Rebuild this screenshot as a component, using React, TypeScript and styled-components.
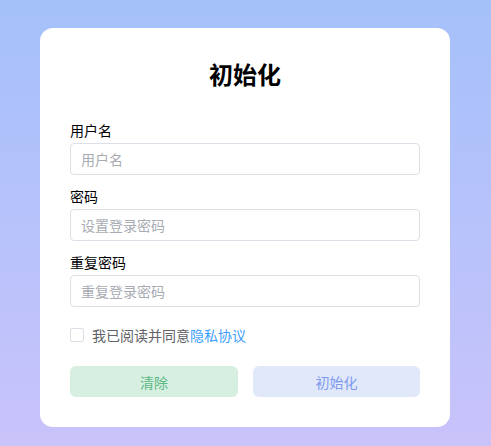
import { FC, useState } from "react";
import styled, { createGlobalStyle } from "styled-components";

const GlobalStyle = createGlobalStyle`
  html, body {
    margin: 0;
    padding: 0;
    height: 100%;
  }
  body {
    font-family: "Noto Sans CJK SC", "Noto Sans", sans-serif;
    background: linear-gradient(180deg, #a5c1fa 0%, #b7c2fb 50%, #c9c3fa 100%);
    min-height: 446px;
  }
  * {
    box-sizing: border-box;
  }
`;

const App: FC = () => {
  const [agreed, setAgreed] = useState(false);
  return (
    <>
      <GlobalStyle />
      <Page>
        <Card>
          <Title>初始化</Title>
          <Form>
            <Field>
              <Label>用户名</Label>
              <Input placeholder="用户名" />
            </Field>
            <Field>
              <Label>密码</Label>
              <Input type="password" placeholder="设置登录密码" />
            </Field>
            <Field>
              <Label>重复密码</Label>
              <Input type="password" placeholder="重复登录密码" />
            </Field>
            <Agreement>
              <Check
                $checked={agreed}
                onClick={() => setAgreed(!agreed)}
              />
              <span>
                我已阅读并同意<Link>隐私协议</Link>
              </span>
            </Agreement>
            <Buttons>
              <Button $variant="green">清除</Button>
              <Button $variant="blue">初始化</Button>
            </Buttons>
          </Form>
        </Card>
      </Page>
    </>
  );
};

export default App;

/**
 * Styled components
 */
const Page = styled.div`
  display: flex;
  justify-content: center;
  padding: 28px 41px 19px 40px;
`;
const Card = styled.div`
  width: 410px;
  background-color: #ffffff;
  border-radius: 13px;
  padding: 28px 30px 30px;
`;
const Title = styled.h1`
  margin: 0;
  font-size: 24px;
  line-height: 36px;
  font-weight: 700;
  text-align: center;
  color: #000000;
`;
const Form = styled.div`
  margin-top: 27px;
  display: flex;
  flex-direction: column;
`;
const Field = styled.div`
  display: flex;
  flex-direction: column;
  margin-bottom: 10px;
`;
const Label = styled.label`
  font-size: 14px;
  line-height: 22px;
  color: #000000;
  margin-bottom: 2px;
`;
const Input = styled.input`
  height: 32px;
  width: 100%;
  border: 1px solid #dcdfe6;
  border-radius: 4px;
  padding: 0 10px;
  font-family: inherit;
  font-size: 14px;
  color: #303133;
  outline: none;
  &::placeholder {
    color: #a8abb2;
  }
`;
const Agreement = styled.div`
  display: flex;
  align-items: center;
  gap: 8px;
  margin-top: 7px;
  height: 22px;
  font-size: 14px;
  color: #606266;
`;
const Check = styled.span<{ $checked: boolean }>`
  width: 14px;
  height: 14px;
  border: 1px solid #dcdfe6;
  border-radius: 2px;
  background-color: ${(p) => (p.$checked ? "#409eff" : "#ffffff")};
  cursor: pointer;
`;
const Link = styled.span`
  color: #409eff;
  cursor: pointer;
`;
const Buttons = styled.div`
  display: grid;
  grid-template-columns: 168px 167px;
  justify-content: space-between;
  margin-top: 20px;
`;
const Button = styled.button<{ $variant: "green" | "blue" }>`
  height: 31px;
  border: none;
  border-radius: 6px;
  font-family: inherit;
  font-size: 14px;
  background-color: ${(p) => (p.$variant === "green" ? "#d6efe1" : "#e0e8fa")};
  color: ${(p) => (p.$variant === "green" ? "#5cb883" : "#7f9bee")};
  cursor: pointer;
`;
